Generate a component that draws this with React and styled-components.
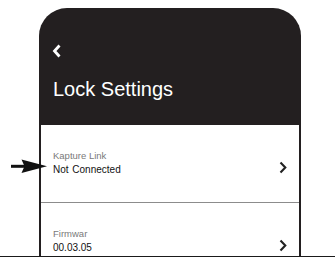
import React from 'react';
import styled, { createGlobalStyle } from 'styled-components';

const GlobalStyle = createGlobalStyle`
  html, body {
    margin: 0;
    padding: 0;
    background: #fff;
  }
  body {
    font-family: "Liberation Sans", Arial, sans-serif;
  }
`

const Frame = styled.div`
  position: relative;
  width: 335px;
  height: 257px;
  box-sizing: border-box;
  padding: 8px 0 0 39px;
  overflow: hidden;
  border-bottom: 1.5px solid #1a1a1a;
`

const Phone = styled.div`
  width: 262px;
  height: 100%;
  box-sizing: border-box;
  background: #231f20;
  border-radius: 28px 28px 0 0;
  padding: 0 2px;
  display: flex;
  flex-direction: column;
`

const Header = styled.div`
  height: 117px;
  flex-shrink: 0;
  box-sizing: border-box;
  padding: 36px 11px 0 11px;
  display: flex;
  flex-direction: column;
`

const BackButton = styled.div`
  width: 10px;
  height: 14px;
  color: #fff;
`

const Title = styled.h1`
  margin: 21px 0 0 1px;
  font-size: 20px;
  line-height: 1;
  font-weight: 400;
  color: #fff;
`

const List = styled.div`
  flex: 1;
  background: #fff;
  overflow: hidden;
`

const Row = styled.div`
  display: flex;
  justify-content: space-between;
  align-items: flex-start;
  padding: 24px 12px 0 12px;
  box-sizing: border-box;
  border-bottom: ${p => (p.$last ? 'none' : '1px solid #8c8c8c')};
  height: ${p => (p.$last ? '77px' : '78px')};
`

const Texts = styled.div`
  display: flex;
  flex-direction: column;
`

const Label = styled.span`
  font-size: 9.5px;
  line-height: 14px;
  color: #7a7a7a;
`

const Value = styled.span`
  font-size: 10px;
  line-height: 14px;
  color: #111;
  word-spacing: 1px;
`

const Chevron = styled.div`
  width: 8px;
  height: 13px;
  margin-top: 11px;
  color: #222;
`

const Pointer = styled.svg`
  position: absolute;
  left: 10px;
  top: 159px;
`

const ChevronRight = () => (
  <svg width="8" height="13" viewBox="0 0 8 13">
    <path d="M1.5 1.5 L6.3 6.5 L1.5 11.5" fill="none" stroke="currentColor" strokeWidth="2.1" />
  </svg>
)

const ChevronLeft = () => (
  <svg width="10" height="14" viewBox="0 0 10 14">
    <path d="M7.5 1.5 L2.5 7 L7.5 12.5" fill="none" stroke="currentColor" strokeWidth="2.8" />
  </svg>
)

const items = [
  { label: 'Kapture Link', value: 'Not Connected' },
  { label: 'Firmwar', value: '00.03.05' },
]

export default function App() {
  return (
    <>
      <GlobalStyle />
      <Frame>
        <Phone>
          <Header>
            <BackButton>
              <ChevronLeft />
            </BackButton>
            <Title>Lock Settings</Title>
          </Header>
          <List>
            {items.map((item, i) => (
              <Row key={item.label} $last={i === items.length - 1}>
                <Texts>
                  <Label>{item.label}</Label>
                  <Value>{item.value}</Value>
                </Texts>
                <Chevron>
                  <ChevronRight />
                </Chevron>
              </Row>
            ))}
          </List>
        </Phone>
        <Pointer width="38" height="15" viewBox="0 0 38 15">
          <rect x="1" y="5.8" width="14" height="3" fill="#111" />
          <path d="M11.5 0.5 L37 7.3 L11.5 14 L14.5 7.3 Z" fill="#111" />
        </Pointer>
      </Frame>
    </>
  )
}
